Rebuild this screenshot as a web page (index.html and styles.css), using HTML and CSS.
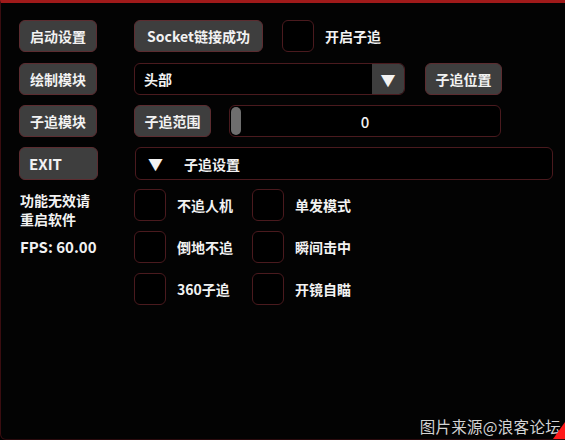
FILE: index.html
```html
<!DOCTYPE html>
<html lang="zh">
<head>
<meta charset="utf-8">
<link rel="stylesheet" href="styles.css">
</head>
<body>
<div class="window">
  <div class="content">
    <div class="row">
      <div class="btn side">启动设置</div>
      <div class="main">
        <div class="btn socket">Socket链接成功</div>
        <div class="check first"></div>
        <span class="label">开启子追</span>
      </div>
    </div>
    <div class="row">
      <div class="btn side">绘制模块</div>
      <div class="main">
        <div class="combo">
          <span class="combo-text">头部</span>
          <span class="combo-arrow">▼</span>
        </div>
        <div class="btn pos">子追位置</div>
      </div>
    </div>
    <div class="row">
      <div class="btn side">子追模块</div>
      <div class="main">
        <div class="btn range">子追范围</div>
        <div class="slider">
          <span class="grab"></span>
          <span class="slider-val">0</span>
        </div>
      </div>
    </div>
    <div class="row tall">
      <div class="btn side exit">EXIT</div>
      <div class="main">
        <div class="header"><span class="tri">▼</span><span class="header-text">子追设置</span></div>
      </div>
    </div>
    <div class="lower">
      <div class="info">
        <div class="warn">功能无效请<br>重启软件</div>
        <div class="fps">FPS: 60.00</div>
      </div>
      <div class="opts">
        <div class="opt"><div class="check"></div><span class="label">不追人机</span></div>
        <div class="opt"><div class="check"></div><span class="label">单发模式</span></div>
        <div class="opt"><div class="check"></div><span class="label">倒地不追</span></div>
        <div class="opt"><div class="check"></div><span class="label">瞬间击中</span></div>
        <div class="opt"><div class="check"></div><span class="label">360子追</span></div>
        <div class="opt"><div class="check"></div><span class="label">开镜自瞄</span></div>
      </div>
    </div>
  </div>
  <div class="watermark">图片来源@浪客论坛</div>
  <div class="corner"></div>
</div>
</body>
</html>
```

FILE: styles.css
```css
* { box-sizing: border-box; }
html, body {
  margin: 0;
  padding: 0;
  background: #000;
  width: 565px;
  height: 440px;
  overflow: hidden;
}
body {
  font-family: "Noto Sans CJK SC", "Noto Sans", sans-serif;
  font-size: 14px;
  font-weight: 700;
  color: #f2f2f2;
}
.window {
  position: relative;
  width: 565px;
  height: 440px;
  background: #030303;
  border-top: 3px solid #a01a1a;
  border-left: 1px solid #3a0d10;
  border-bottom: 1px solid #2a0a0d;
  border-bottom-left-radius: 6px;
  overflow: hidden;
}
.content {
  padding: 17px 0 0 18px;
  display: flex;
  flex-direction: column;
  gap: 11px;
}
.row {
  display: flex;
  height: 32px;
  gap: 37px;
}
.row:nth-child(3) { margin-top: -1px; }
.row:nth-child(4) { margin-top: -1px; }
.row.tall { height: 33px; }
.main {
  display: flex;
  align-items: center;
  height: 100%;
}
.btn {
  height: 100%;
  display: flex;
  align-items: center;
  justify-content: center;
  background: #3e3e3e;
  border: 1px solid #5c2c30;
  border-radius: 6px;
  white-space: nowrap;
}
.side { width: 78px; }
.exit { justify-content: flex-start; padding-left: 9px; width: 79px; font-size: 15px; }
.socket { width: 129px; }
.check {
  width: 32px;
  height: 32px;
  border: 1px solid #4a1a1e;
  border-radius: 6px;
  background: #000;
  flex: none;
}
.check.first { margin-left: 19px; }
.label { margin-left: 11px; white-space: nowrap; }
.combo {
  width: 271px;
  height: 100%;
  display: flex;
  border: 1px solid #4a1a1e;
  border-radius: 6px;
  background: #000;
  overflow: hidden;
}
.combo-text {
  flex: 1;
  display: flex;
  align-items: center;
  padding-left: 9px;
}
.combo-arrow {
  width: 32px;
  display: flex;
  align-items: center;
  justify-content: center;
  background: #3e3e3e;
  font-size: 15px;
}
.pos { width: 77px; margin-left: 20px; }
.range { width: 77px; }
.slider {
  position: relative;
  width: 272px;
  height: 100%;
  margin-left: 18px;
  border: 1px solid #4a1a1e;
  border-radius: 6px;
  background: #000;
  display: flex;
  align-items: center;
  justify-content: center;
  font-weight: 500;
  font-size: 15px;
}
.grab {
  position: absolute;
  left: 1px;
  top: 1px;
  bottom: 1px;
  width: 10px;
  border-radius: 5px;
  background: #6e6e6e;
}
.header {
  width: 418px;
  height: 100%;
  border: 1px solid #4a1a1e;
  border-radius: 6px;
  background: #000;
  display: flex;
  align-items: center;
  padding-left: 12px;
}
.tri { font-size: 15px; }
.header-text { margin-left: 21px; }
.lower {
  display: flex;
  gap: 37px;
  margin-top: -2px;
}
.info {
  width: 78px;
  padding-top: 2px;
  padding-left: 1px;
}
.warn { line-height: 18.5px; }
.fps { margin-top: 8px; font-size: 15px; font-weight: 700; white-space: nowrap; }
.opts {
  display: grid;
  grid-template-columns: 118px 120px;
  row-gap: 10px;
}
.opt {
  display: flex;
  align-items: center;
  height: 32px;
}
.opt .label { margin-left: 11px; }
.watermark {
  position: absolute;
  right: 4px;
  bottom: 2px;
  font-size: 15.5px;
  font-weight: 400;
  color: #d4d4d4;
  letter-spacing: 0.3px;
}
.corner {
  position: absolute;
  right: 0;
  bottom: 0;
  width: 0;
  height: 0;
  border-left: 12px solid transparent;
  border-bottom: 17px solid #ff1a1a;
}
```
